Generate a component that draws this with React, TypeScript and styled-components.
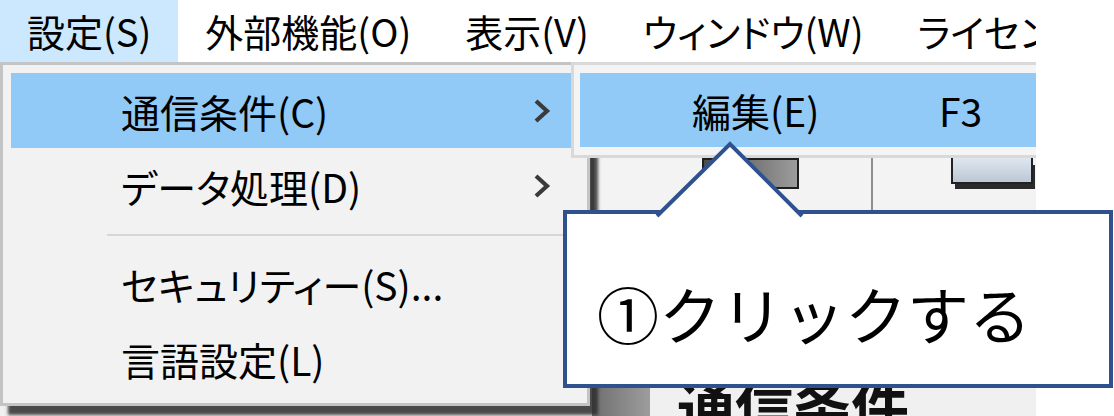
import React from 'react';
import styled, { createGlobalStyle } from 'styled-components';

const jp = `"Noto Sans CJK JP", "Noto Sans", sans-serif`;

const GlobalStyle = createGlobalStyle`
  html, body {
    margin: 0;
    padding: 0;
    background: #ffffff;
    font-family: ${jp};
  }
`;

const Stage = styled.div`
  position: relative;
  width: 1114px;
  height: 416px;
  overflow: hidden;
  background: #ffffff;
`;

const Screen = styled.div`
  position: relative;
  width: 1036px;
  height: 416px;
  overflow: hidden;
  display: flex;
  flex-direction: column;
  background: #f0f0f0;
`;

const MenuBar = styled.div`
  display: flex;
  flex-shrink: 0;
  height: 62px;
  background: #ffffff;
  border-bottom: 3px solid #e6e6e6;
  white-space: nowrap;
`;

const MenuBarItem = styled.div<{ $active?: boolean }>`
  display: flex;
  align-items: center;
  padding: 0 27px 2px 27px;
  font-size: 38px;
  font-feature-settings: 'palt';
  color: #000;
  background: ${(p) => (p.$active ? '#cce8ff' : 'transparent')};
`;

const AppBody = styled.div`
  flex: 1;
  display: flex;
  flex-direction: column;
`;

// hidden under the open menus
const Ribbon = styled.div`
  height: 92px;
`;

const Toolbar = styled.div`
  display: flex;
  align-items: flex-start;
  height: 53px;
  margin-left: 591px;
  padding-top: 1px;
  border-left: 3px solid #8c8c8c;
  background: #f3f3f3;
`;

const DarkTool = styled.div`
  width: 93px;
  height: 27px;
  margin-left: 108px;
  border: 2px solid #1e1e1e;
  background: linear-gradient(to right, #4c4c4c, #9c9c9c);
`;

const ToolDivider = styled.div`
  width: 2px;
  height: 53px;
  margin-left: 72px;
  background: #8f8f8f;
`;

const LightTool = styled.div`
  width: 78px;
  height: 24px;
  margin-left: 78px;
  border: 2px solid #222;
  border-top: none;
  background: linear-gradient(#dfe6ee, #bcc8d6);
  box-shadow: 3px 6px 0 -1px #2a2a2a;
`;

const Workspace = styled.div`
  flex: 1;
  display: grid;
  grid-template-columns: 592px 58px 1fr;
`;

const SidePanel = styled.div`
  grid-column: 2;
  background: linear-gradient(to right, #6f6f6f, #9d9d9d);
`;

const PageTitle = styled.div`
  grid-column: 3;
  padding: 164px 0 0 27px;
  font-size: 58px;
  line-height: 1;
  font-weight: 700;
  color: #111;
  white-space: nowrap;
`;

const Dropdown = styled.div`
  position: absolute;
  left: 0;
  top: 62px;
  width: 590px;
  box-sizing: border-box;
  padding: 8px 8px 7px;
  background: #f2f2f2;
  border: 3px solid #c4c4c4;
  box-shadow: 8px 9px 3px rgba(45, 45, 45, 0.85);
`;

const MenuRow = styled.div<{ $active?: boolean }>`
  display: flex;
  align-items: center;
  height: 75px;
  padding: 0 27px 0 110px;
  font-size: 39px;
  font-feature-settings: 'palt';
  color: #000;
  white-space: nowrap;
  background: ${(p) => (p.$active ? '#91c9f7' : 'transparent')};
`;

const RowLabel = styled.span`
  flex: 1;
`;

const Separator = styled.div`
  display: flex;
  align-items: center;
  height: 23px;
  margin-left: 96px;

  &::after {
    content: '';
    flex: 1;
    height: 2px;
    background: #d6d6d6;
  }
`;

const Submenu = styled.div`
  position: absolute;
  left: 571px;
  top: 62px;
  width: 520px;
  box-sizing: border-box;
  padding: 8px 0 8px 6px;
  background: #f4f4f4;
  border: 3px solid #d9d9d9;
`;

const SubRow = styled.div`
  display: grid;
  grid-template-columns: 247px auto;
  align-items: center;
  height: 74px;
  padding-left: 112px;
  font-size: 39px;
  font-feature-settings: 'palt';
  color: #000;
  white-space: nowrap;
  background: #91c9f7;
`;

const Callout = styled.div`
  position: absolute;
  left: 563px;
  top: 210px;
  width: 550px;
  height: 178px;
  box-sizing: border-box;
  padding: 68px 0 0 30px;
  border: 4px solid #2f528f;
  background: #ffffff;
  font-size: 62px;
  line-height: 1;
  color: #000;
  white-space: nowrap;
`;

const Pointer = styled.svg`
  position: absolute;
  left: 84px;
  top: -72px;
  overflow: visible;
`;

const Chevron = () => (
  <svg width="20" height="26" viewBox="0 0 20 26">
    <polyline points="4,3 15,13 4,23" fill="none" stroke="#3a3a3a" strokeWidth="4.2" strokeLinejoin="miter" />
  </svg>
);

const menuBarItems = ['設定(S)', '外部機能(O)', '表示(V)', 'ウィンドウ(W)', 'ライセンス(L)'];

export default function App() {
  return (
    <>
      <GlobalStyle />
      <Stage>
        <Screen>
          <MenuBar>
            {menuBarItems.map((label, i) => (
              <MenuBarItem key={label} $active={i === 0}>
                {label}
              </MenuBarItem>
            ))}
          </MenuBar>
          <AppBody>
            <Ribbon />
            <Toolbar>
              <DarkTool />
              <ToolDivider />
              <LightTool />
            </Toolbar>
            <Workspace>
              <SidePanel />
              <PageTitle>通信条件</PageTitle>
            </Workspace>
          </AppBody>

          <Dropdown>
            <MenuRow $active>
              <RowLabel>通信条件(C)</RowLabel>
              <Chevron />
            </MenuRow>
            <MenuRow>
              <RowLabel>データ処理(D)</RowLabel>
              <Chevron />
            </MenuRow>
            <Separator />
            <MenuRow>
              <RowLabel>セキュリティー(S)...</RowLabel>
            </MenuRow>
            <MenuRow>
              <RowLabel>言語設定(L)</RowLabel>
            </MenuRow>
          </Dropdown>

          <Submenu>
            <SubRow>
              <span>編集(E)</span>
              <span>F3</span>
            </SubRow>
          </Submenu>
        </Screen>

        <Callout>
          <Pointer width="146" height="76" viewBox="0 0 146 76">
            <polygon points="8,76 8,73 79,4 149,73 149,76" fill="#ffffff" />
            <polyline points="6,74 79,2 151,74" fill="none" stroke="#2f528f" strokeWidth="4" />
          </Pointer>
          ①クリックする
        </Callout>
      </Stage>
    </>
  );
}
